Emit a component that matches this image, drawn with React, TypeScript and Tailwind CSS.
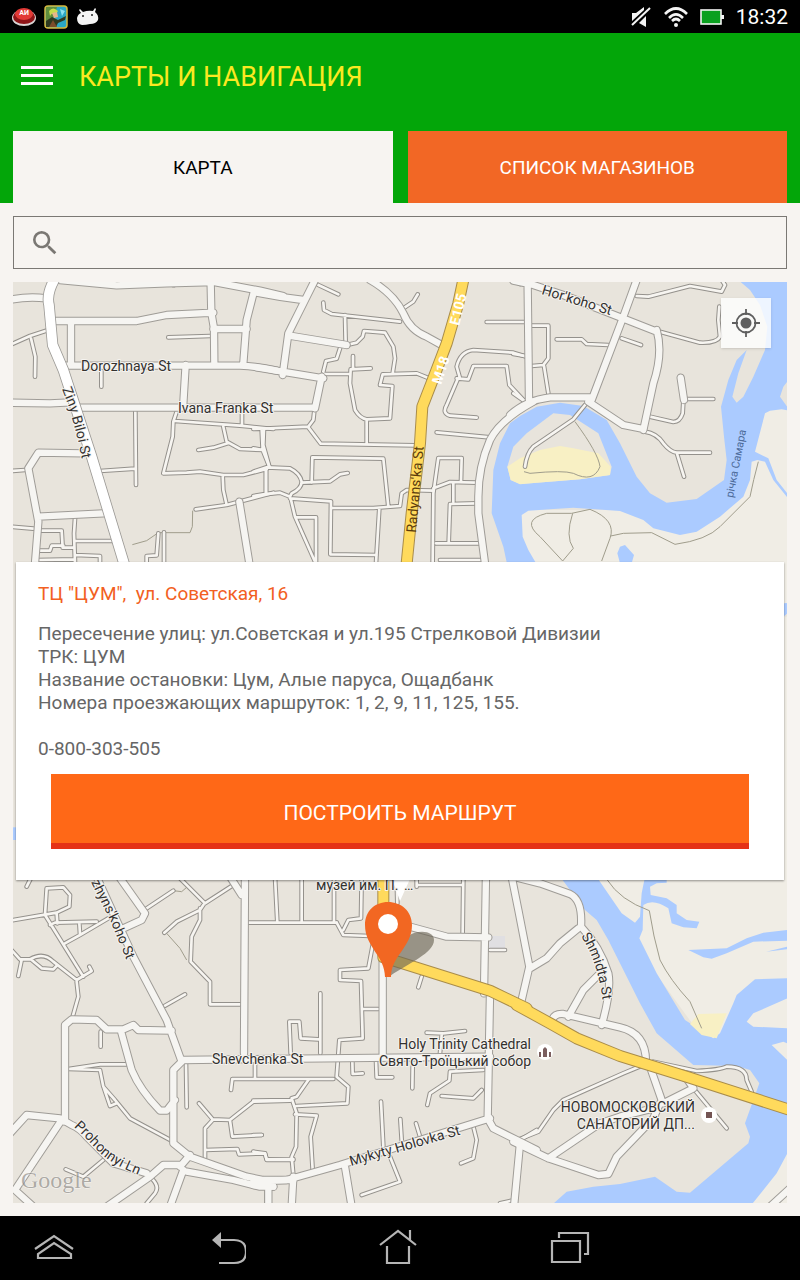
import { useState } from "react";
import type { ReactNode } from "react";
import { MdSearch } from "react-icons/md";

type Tile = {
  x: number;
  y: number;
  land?: string;
  water?: string;
  island?: string;
  beach?: string;
  trails?: string;
  streets: string;
  avenues: string;
  wide?: string;
  highway?: string;
};

// Tile paths are drawn at three units per map pixel.
const TILES: Tile[] = [
  {
    x: 0,
    y: 280,
    trails: "M397 794L440 782L475 758L570 758L577 740L578 692",
    streets:
      "M30 195L90 168L145 150M93 175L106 230L105 290M505 172L630 168M304 270V320M406 390L408 615M300 573L405 566M30 573L75 570M30 740L100 746M225 715L222 760L225 850M120 752H185L188 803H222M110 812H150L155 797H190M228 783H335M225 825L300 828V850M110 840L225 838M440 850V828L470 826L475 760M492 757V850M587 688L680 675L820 638M668 585L670 630L680 675M530 395L520 425L518 470L490 580L560 578L600 575L670 585H730L800 567M525 423L720 437L820 447M726 395V437M670 440L680 485L720 507L790 510M595 510L640 503L683 490M792 445L790 495L808 560M798 570V640M510 5Q520 25 528 8",
    avenues:
      "M30 60Q80 48 140 55M180 0L350 16L500 10L640 6L780 32L850 48M168 123H410L500 105L640 98M632 10L634 98L642 145L643 255M640 147H740M763 30L740 120L730 250M213 130V250M190 257H720Q780 260 830 272M557 255L550 370M30 368L150 370L210 367M230 383H940M250 520L115 518L85 565L115 725L105 850M115 710L310 700M718 665L748 850",
    wide: "M168 -10Q138 40 147 75L158 195L190 270L275 530L378 870",
  },
  {
    x: 260,
    y: 280,
    streets:
      "M175 15L235 43M190 68L192 90L215 102L420 125M430 85L460 65L473 43M255 105L257 190M260 195L290 188L308 170L312 153L375 158L400 200L405 235L398 280M190 275L198 243L230 236L240 205M190 282H265M279 228V265M332 265L272 268L270 310L285 390Q300 415 320 418L390 415L397 318L360 315L368 283L470 280L510 296M320 420V492M163 392L160 420L145 440L-20 447M145 442L182 491L465 496M-20 505L8 510M5 450L8 510L28 560M-20 575L20 562L90 565Q120 580 125 605Q125 625 95 640L90 650L60 638L10 643L-20 648M18 565V640M125 608L210 604L240 583L263 579M155 608L157 532L370 536L385 680M90 655L213 664L211 823L350 825M92 655L105 710L165 845M108 712H168V850M215 684H340L420 678L425 640L440 630L520 632M358 684L348 850M530 457L690 472M650 413L570 407Q545 400 560 375L592 300M600 295L590 260Q600 215 640 210L760 218L800 230M590 295L625 298L640 258H740L748 315L795 365M680 126H800M603 605L605 534H535L520 640L518 850M520 625L570 606L650 608M580 610V665M650 670L570 672L566 790M528 790H660M540 840H665M760 0L780 12",
    avenues:
      "M-10 38Q60 52 130 60M165 0L135 60L85 160L68 285M95 168L260 195M-10 262L190 295M185 290L165 385M330 0Q400 40 430 100Q450 150 500 170L545 195M820 365Q720 420 690 480Q655 560 655 650V700L675 850",
    highway: "M612 -10L595 70L560 190L520 295L487 380L480 490L455 700L438 870",
  },
  {
    x: 520,
    y: 280,
    land: "M-10 690H480L640 620L700 400L720 380H840V1000H-10Z",
    water:
      "M655 0L690 30L720 75L742 140L735 210L700 290L670 350L650 368L637 350L655 280L680 210L650 240L625 300L603 380L612 470L620 540L612 600L530 657L440 668L390 640L350 590L300 490L260 420L190 378L120 368L50 380L0 408L-30 430L-60 490L-80 570L-85 700L-50 800L-35 870H60L25 810L8 770L5 705L25 692L160 683L300 693L370 720L400 745L480 765L530 755L600 710L670 650L690 600L695 545L712 540L735 545L760 600L802 652V640L770 600L745 535L705 515L735 400L750 392L785 388L810 392L780 350L790 320L802 305V0ZM292 820L300 800L315 795L342 825L335 850H300ZM790 970H802V1000L790 1010Z",
    island: "M-38 560L-20 500L20 460L100 400L150 405L235 460L275 560L270 585L180 598L50 608L0 612L-28 600Z",
    beach: "M-38 560L0 535L60 510L120 498L160 505L235 520L272 560L270 585L180 598L50 608L0 613L-28 600Z",
    trails:
      "M165 425Q235 520 240 560Q220 610 160 580Q130 570 30 580L12 575M128 843L60 770Q0 720 80 700L155 700L210 688Q290 720 270 775L245 843M158 700Q135 770 160 805L128 843M272 768L310 760L395 758L465 793Q560 780 600 740L690 650Q700 600 715 545",
    streets:
      "M350 48L385 50L510 18L605 35L615 15L605 0M420 155L540 188Q590 190 600 170L595 120L598 80M110 178H185L200 192L265 195M305 175L363 195M35 137H85V235L70 255L35 258M72 258L85 340M-20 222L15 228M-20 340L15 365M490 357H580M490 365L488 400Q480 425 460 426L390 410M375 455Q410 460 430 490Q450 515 470 518H570M470 518L492 590M195 375L160 418L40 500Q20 520 15 560",
    avenues:
      "M23 20L27 360M-20 2L40 15L130 45L410 155M350 0L310 110L215 360M410 150Q430 220 400 310L370 450M-30 405Q20 360 90 352H215M205 365L310 435L370 447M482 293L492 360",
  },
  {
    x: 0,
    y: 870,
    water: "M39 -128H60V-90H39Z",
    trails: "M500 190L540 235L560 270M520 62L545 65L560 52",
    streets:
      "M80 50L95 20M135 135L140 55L190 52L210 75L208 110L170 128L30 152M135 135L250 320M150 165L165 158L290 155M170 130L172 160M195 220L240 195L325 145M238 160L240 192M440 115L520 62M30 235L60 268H90Q130 245 160 275L230 330L275 303L268 290M95 270L125 295L160 298L172 285M65 270L55 318M230 335L235 380L218 440M540 25L615 100L700 45M493 188L530 155L600 120L610 105M600 115V150L575 200L572 275L630 335V403H720M495 407L555 373M745 158H1010M302 485V530M380 583H300L205 597L300 600L310 650L345 690L390 745L520 815M312 655L330 708L350 700M558 580L560 712M597 700L638 748L690 750L760 695L870 692M638 750L615 775V865M690 752L697 800L785 795M615 840L712 837L717 853L795 850L800 870H880M765 580V625M693 660L697 627H1000M197 898L250 920L310 870M455 925Q480 950 465 970L440 1000M800 960V1010",
    avenues:
      "M350 10L435 130L425 150L370 175M690 20L725 75M735 10L732 550M550 570L900 566L1470 560M195 755V465L215 448L290 450L320 478H370L400 465L415 480L515 482M362 480L395 600Q420 660 480 722H500L525 690M545 575L520 600V820L570 860L740 920L790 930H880M560 905L700 930L780 950H820M30 790L80 735L180 745L215 765Q240 775 260 800L340 880L440 910M185 750L45 960L100 1010M320 1010L450 920L490 885H540M570 855L540 890M550 900L510 1010M285 10L400 260L500 450L545 575",
  },
  {
    x: 260,
    y: 870,
    streets:
      "M45 20L52 158M125 20V155M222 20V155M305 20L303 145L265 150L250 180M230 158L250 195L330 198M610 20L608 190M470 45H610M470 20V50M410 20L412 100M735 240H690M340 215L325 295L240 300V330L303 333L308 505L238 510L230 620L265 650L262 700L110 708M308 417H355M485 320L475 352M500 488L550 490L615 483M545 495L540 550M181 370V550M175 508L122 505L118 455H88L92 550M277 575L278 612L308 610M348 570L350 622H397M458 590L457 655M670 600L570 605L568 632L510 670L502 705M545 678L640 685L665 660M145 630L110 680L95 685L110 730L108 830L95 860L100 915M-20 692L95 690M105 733L170 737L152 800L158 900M-20 795H5M-20 845L15 850L20 868L100 867M363 695L370 830M421 747L425 810M468 760L480 800M390 860L420 935L305 975M640 770L650 810L640 865L603 880M720 1000L755 992M780 810L830 780",
    avenues:
      "M450 170L560 200L685 202M368 262V555M-20 935L80 930L240 885L690 745M100 920L95 1010M255 890L275 1010M25 950V1010M-20 945L40 950M678 10L672 370M690 370L683 745L700 775L780 815L830 840M780 820L762 1010",
    highway: "M370 0V262L690 362L800 415",
  },
  {
    x: 520,
    y: 870,
    land: "M200 -760H840V1010H690L760 800V560L560 520L400 300L230 30Z",
    water:
      "M90 -20L205 -20L240 35L305 130L345 158L360 140L365 70L375 20H440V38L410 40L390 50L392 75L440 85L470 105V130L500 150L538 155L530 175L490 172L455 160L445 115Q400 85 370 105L368 180L358 205L410 310L495 450L580 505L600 490L640 400L650 375L705 328L802 325V385L700 430L680 455L700 470L802 475V520L790 515L755 525L802 570V850L770 910L690 1010H90L140 965L220 950L300 942L405 920L470 965L510 968L685 820L690 800L675 760L700 690L718 640L690 600L650 588L520 585L410 490L360 400L265 210L230 150L195 120ZM505 240L620 235L680 205L730 188L802 180V212L700 215L620 250L575 266L550 262ZM738 245L802 230V238ZM795 -800H802V-770L795 -765Z",
    beach: "M510 462L535 432L620 430L590 505L545 495Z",
    trails: "M262 30Q300 90 388 122Q400 200 420 270Q450 330 510 395L545 475",
    streets:
      "M370 585L310 610L130 690L100 720L55 785L-20 815M400 575L530 603Q600 600 620 590Q680 590 680 630L695 665M520 655L620 775",
    avenues:
      "M-20 20L60 40L150 72Q188 90 183 170Q240 230 265 310Q275 360 245 465M175 175L120 220L80 265L30 295M-27 10L-5 120L28 290L5 390M240 310L190 360L145 440M95 455Q100 430 130 432L300 472Q380 490 378 580M390 590L425 690M400 590L500 625L520 655L430 700M-20 815L85 865L235 915L265 912L290 860L400 745L420 700M85 865L240 760L300 740L400 715M750 1010L810 955",
    highway: "M-10 405L90 460L170 505L300 558L500 620L810 720",
  },
];

const LAYERS: { key: "streets" | "avenues" | "wide" | "highway"; casing: string; fill: string; outer: number; inner: number }[] = [
  { key: "streets", casing: "#94918c", fill: "#f7f5f1", outer: 14, inner: 8 },
  { key: "avenues", casing: "#9f9c97", fill: "#f6f5f2", outer: 25, inner: 19 },
  { key: "wide", casing: "#9c9a96", fill: "#ffffff", outer: 34, inner: 29 },
  { key: "highway", casing: "#a98c4a", fill: "#ffda5c", outer: 36, inner: 30 },
];

function place(tile: Tile) {
  return `translate(${tile.x} ${tile.y}) scale(${1 / 3})`;
}

function MapLabels() {
  return (
    <>
      <defs>
        <path id="ziny" d="M62 389L69 407L78 440L84 470" />
        <path id="zhyns" d="M91 882L110 920L129 966" />
        <path id="prohonnyi" d="M74 1127Q84 1136 98 1151Q112 1166 150 1179" />
        <path id="shmidta" d="M581 936Q598 962 603 1002" />
      </defs>
      <g
        fontSize={14}
        fill="#33312f"
        stroke="#f5f3ef"
        strokeWidth={2}
        strokeLinejoin="round"
        style={{ paintOrder: "stroke" }}
      >
        <text x={81} y={371}>Dorozhnaya St</text>
        <text x={178} y={413}>Ivana Franka St</text>
        <text x={212} y={1064}>Shevchenka St</text>
        <text transform="translate(541 294) rotate(17)">Hor'koho St</text>
        <text transform="translate(351 1166) rotate(-16)">Mykyty Holovka St</text>
        <text><textPath href="#ziny">Ziny Biloi St</textPath></text>
        <text><textPath href="#zhyns">zhyns'koho St</textPath></text>
        <text><textPath href="#prohonnyi">Prohonnyi Ln</textPath></text>
        <text><textPath href="#shmidta">Shmidta St</textPath></text>
        <text x={316} y={890}>музей им. П.<tspan x={404}>…</tspan></text>
        <g textAnchor="end">
          <text x={531} y={1049}>Holy Trinity Cathedral</text>
          <text x={531} y={1066}>Свято-Троїцький собор</text>
          <text x={695} y={1112}>НОВОМОСКОВСКИЙ</text>
          <text x={695} y={1129}>САНАТОРИЙ ДП...</text>
        </g>
      </g>
      <text transform="translate(416 533) rotate(-85)" fontSize={14} fill="#5b3b0c">Radyans'ka St</text>
      <text transform="translate(733 498) rotate(-79)" fontSize={11} fill="#4c6a99">річка Самара</text>
      <g fontSize={14} fontWeight={700} fill="#ffffff">
        <text transform="translate(441 385) rotate(-72)">M18</text>
        <text transform="translate(459 326) rotate(-76)">E105</text>
      </g>
      <text x={21} y={1188} fontSize={24} fill="#8f8c88" opacity={0.65} stroke="#ffffff" strokeWidth={1} style={{ paintOrder: "stroke" }} fontFamily="Liberation Serif, serif">
        Google
      </text>
    </>
  );
}

function CityMap() {
  return (
    <svg
      viewBox="13 282 774 921"
      preserveAspectRatio="xMidYMin slice"
      className="absolute inset-0 h-full w-full"
      role="img"
      aria-label="Карта"
    >
      <rect x={13} y={282} width={774} height={921} fill="#e8e4dc" />
      {TILES.map((tile, i) => (
        <g key={i} transform={place(tile)}>
          <path d={tile.land} fill="#f0ede5" />
          <path d={tile.water} fill="#abcbff" />
          <path d={tile.island} fill="#e8e4dc" />
          <path d={tile.beach} fill="#f8f0c4" />
          <path d={tile.trails} fill="none" stroke="#a09d8c" strokeWidth={3} />
        </g>
      ))}
      <rect x={489} y={936} width={16} height={14} fill="#e0dfe2" />
      {LAYERS.map((layer) => (
        <g key={layer.key} fill="none" strokeLinecap="round" strokeLinejoin="round">
          {TILES.map((tile, i) => (
            <path key={`c${i}`} transform={place(tile)} d={tile[layer.key]} stroke={layer.casing} strokeWidth={layer.outer} />
          ))}
          {TILES.map((tile, i) => (
            <path key={`f${i}`} transform={place(tile)} d={tile[layer.key]} stroke={layer.fill} strokeWidth={layer.inner} />
          ))}
        </g>
      ))}
      {/* info card pointer, under the labels */}
      <path d="M392 879H410L400 901Z" fill="#ffffff" />
      <MapLabels />

      {/* places */}
      <circle cx={545} cy={1052} r={8} fill="#ffffff" />
      <path d="M539 1057V1052H541V1057ZM543 1057V1049L545 1047L547 1049V1057ZM549 1057V1052H551V1057Z" fill="#7b5f5f" />
      <circle cx={709} cy={1115} r={8} fill="#ffffff" />
      <rect x={706} y={1112} width={6} height={6} fill="#735453" />

      {/* selected shop */}
      <path d="M390 976C391 955 398 939 414 933C425 930 434 933 434 940C434 953 409 963 390 976Z" fill="#6d6757" opacity={0.65} />
      <path d="M385 977C385 956 365 947 365 925C365 911 375 902 388 902C401 902 412 911 412 925C412 947 391 956 391 977Z" fill="#f26722" />
      <circle cx={388} cy={924} r={10} fill="#ffffff" />
    </svg>
  );
}

function StatusBar() {
  return (
    <div className="flex h-[33px] items-center bg-black px-3 text-white">
      <div className="flex items-center gap-2">
        <svg width="24" height="24" viewBox="0 0 24 24">
          <ellipse cx="12" cy="13" rx="12" ry="8" fill="#d9d4d3" />
          <ellipse cx="12" cy="12" rx="11" ry="7" fill="#8e1417" />
          <ellipse cx="12" cy="9" rx="9" ry="6" fill="#e23a36" />
          <text x="12" y="10" textAnchor="middle" fontSize="7" fontWeight="700" fill="#ffffff">АИ</text>
        </svg>
        <svg width="24" height="24" viewBox="0 0 24 24">
          <rect x="1" y="1" width="22" height="22" rx="3" fill="#2ba7c4" stroke="#d6b93c" strokeWidth="1.5" />
          <path d="M2 2H13L10 12L2 17Z" fill="#5f8e3d" />
          <path d="M5 6Q9 1 14 6L12 9Q8 7 6 11Z" fill="#c6dc4c" />
          <path d="M8 8L13 7L14 12L10 13Z" fill="#e9b58a" />
          <path d="M2 16L8 12L14 15L22 11L21 15L14 18L12 22H2Z" fill="#2f3a20" />
          <path d="M5 22L9 15L13 22Z" fill="#7d4c2b" />
          <path d="M16 4L21 6L18 11Z" fill="#8be0ef" />
        </svg>
        <svg width="24" height="24" viewBox="0 0 24 24" fill="#f4f4f4">
          <path d="M4 4L7 7Q12 5 17 6L19 3L20 4L19 7Q23 10 22 15Q20 19 14 19Q10 20 6 20Q1 19 1 13Q2 9 5 8L3 5Z" />
          <circle cx="7" cy="11" r="1" fill="#222222" />
          <circle cx="16" cy="10" r="1" fill="#222222" />
        </svg>
      </div>
      <div className="ml-auto flex items-center gap-3">
        <svg width="22" height="22" viewBox="0 0 22 22" fill="#f4f4f4">
          <path d="M2 7H6L14 1V4L2 15Z" />
          <path d="M9 17L16 10V21Z" />
          <path d="M20 2L2 19" stroke="#f4f4f4" strokeWidth="2" />
        </svg>
        <svg width="24" height="22" viewBox="0 0 24 22" fill="none" stroke="#f4f4f4" strokeWidth="2.6">
          <path d="M1 8Q12 -3 23 8M5 12Q12 5 19 12M8 15Q12 11 16 15" />
          <circle cx="12" cy="19" r="2" fill="#f4f4f4" stroke="none" />
        </svg>
        <svg width="24" height="18" viewBox="0 0 24 18">
          <rect x="1" y="2" width="20" height="14" fill="#0aa01f" stroke="#f4f4f4" strokeWidth="1.6" />
          <rect x="21" y="7" width="3" height="4" fill="#f4f4f4" />
        </svg>
        <span className="text-[21px] leading-6">18:32</span>
      </div>
    </div>
  );
}

function NavButton({ label, children }: { label: string; children: ReactNode }) {
  return (
    <button type="button" aria-label={label} className="h-10 w-10">
      <svg width="40" height="40" viewBox="0 0 40 40" fill="none" stroke="#b5b5b5" strokeWidth="2.2">
        {children}
      </svg>
    </button>
  );
}

const TABS = [
  { id: "map", label: "КАРТА" },
  { id: "list", label: "СПИСОК МАГАЗИНОВ" },
];

export default function App() {
  const [tab, setTab] = useState("map");
  const [query, setQuery] = useState("");

  return (
    <div className="flex min-h-screen flex-col bg-[#f7f4f1] font-[Roboto,'Noto_Sans',sans-serif]">
      <StatusBar />

      <header className="bg-[#03a609]">
        <div className="flex h-[98px] items-start px-5 pt-6">
          <button type="button" aria-label="Меню" className="flex h-9 w-[34px] flex-col items-center justify-center gap-[5px]">
            <span className="h-[3px] w-8 bg-white" />
            <span className="h-[3px] w-8 bg-white" />
            <span className="h-[3px] w-8 bg-white" />
          </button>
          <h1 className="ml-[25px] text-[27px] leading-10 text-[#fbe822]">КАРТЫ И НАВИГАЦИЯ</h1>
        </div>
        <div role="tablist" className="grid grid-cols-2 gap-[15px] px-[13px]">
          {TABS.map(({ id, label }) => (
            <button
              key={id}
              type="button"
              role="tab"
              aria-selected={tab === id}
              onClick={() => setTab(id)}
              className={`h-[72px] pt-px text-[19px] leading-6 ${tab === id ? "bg-[#f7f4f1] text-black" : "bg-[#f26725] text-white"}`}
            >
              {label}
            </button>
          ))}
        </div>
      </header>

      <main className="flex flex-1 flex-col gap-[13px] p-[13px]">
        <label className="flex h-[53px] items-center border border-[#7b7874] pr-3 pl-[15px]">
          <MdSearch className="h-8 w-8 text-[#7a7773]" />
          <input
            type="text"
            aria-label="Поиск"
            value={query}
            onChange={(e) => setQuery(e.target.value)}
            className="ml-2 flex-1 bg-transparent text-[19px] outline-none"
          />
        </label>

        <section className="relative min-h-[700px] flex-1 overflow-hidden">
          <CityMap />

          <button
            type="button"
            aria-label="Моё местоположение"
            className="absolute top-4 right-4 flex h-[50px] w-[50px] items-center justify-center bg-white/80 shadow"
          >
            <svg width="30" height="30" viewBox="0 0 30 30" fill="none" stroke="#5f5f5f" strokeWidth="1.8">
              <circle cx="15" cy="15" r="9.5" />
              <path d="M15 1V7M15 23V29M1 15H7M23 15H29" />
              <circle cx="15" cy="15" r="5.5" fill="#5f5f5f" stroke="none" />
            </svg>
          </button>

          <article className="absolute inset-x-[3px] top-[280px] bg-white px-[22px] pt-5 pb-[31px] text-[19px] leading-[23px] text-[#666666] shadow-[0_1px_2px_#00000066]">
            <h2 className="whitespace-pre text-[#f26022]">ТЦ "ЦУМ",  ул. Советская, 16</h2>
            <p className="mt-[17px]">
              Пересечение улиц: ул.Советская и ул.195 Стрелковой Дивизии
              <br />
              ТРК: ЦУМ
              <br />
              Название остановки: Цум, Алые паруса, Ощадбанк
              <br />
              Номера проезжающих маршруток: 1, 2, 9, 11, 125, 155.
            </p>
            <p className="mt-[23px]">0-800-303-505</p>
            <div className="mt-[14px] px-[13px]">
              <button
                type="button"
                className="h-[75px] w-full border-b-[6px] border-[#e53216] bg-[#ff6817] pt-2 text-[21px] leading-6 text-white"
              >
                ПОСТРОИТЬ МАРШРУТ
              </button>
            </div>
          </article>
        </section>
      </main>

      <nav className="flex h-16 items-center gap-[132px] bg-black pl-[34px]">
        <NavButton label="Приложения">
          <path d="M1 21L20 8L39 21M4 30V26L20 15L37 26V30Z" />
        </NavButton>
        <NavButton label="Назад">
          <path d="M15 12H28Q40 12 40 24Q40 35 28 35H13" />
          <path d="M6 12L15 4V20Z" fill="#b5b5b5" stroke="none" />
        </NavButton>
        <NavButton label="Домой">
          <path d="M2 17L20 3L38 17M32 12V2M9 18V35H31V18" />
        </NavButton>
        <NavButton label="Недавние">
          <path d="M2 13H30V34H2ZM9 10V5H38V26H34" />
        </NavButton>
      </nav>
    </div>
  );
}
